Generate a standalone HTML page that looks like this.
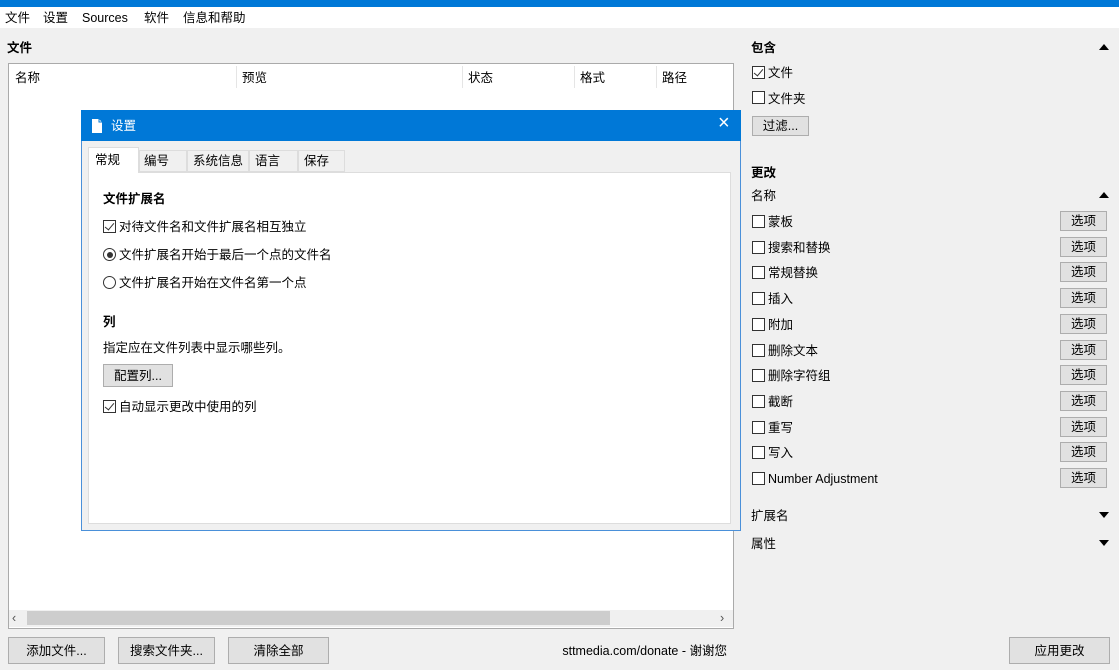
<!DOCTYPE html>
<html><head><meta charset="utf-8"><style>
*{box-sizing:border-box;margin:0;padding:0}
body{width:1119px;height:670px;background:#f0f0f0;position:relative;overflow:hidden;font-family:"Liberation Sans","Noto Sans CJK SC",sans-serif;font-size:12.5px;line-height:16px;color:#000}
.a{position:absolute;white-space:nowrap;line-height:16px;padding-top:1px}
.btn{position:absolute;background:#e1e1e1;border:1px solid #adadad;text-align:center;font-size:12.5px;padding-top:1px}
.cb{position:absolute;width:13px;height:13px;border:1px solid #333;background:#fff}
.cb.k::after{content:"";position:absolute;left:3px;top:0px;width:4px;height:8px;border:solid #333;border-width:0 1.5px 1.5px 0;transform:rotate(40deg)}
.b{font-weight:bold}
.tri{position:absolute;width:0;height:0;border-left:5px solid transparent;border-right:5px solid transparent}
</style></head><body>
<div class="a" style="left:0;top:0;width:1119px;height:7px;background:#0078d7"></div>
<div class="a" style="left:0;top:7px;width:1119px;height:21px;background:#fff"></div>
<div class="a" style="left:5px;top:9px">文件</div>
<div class="a" style="left:43px;top:9px">设置</div>
<div class="a" style="left:82px;top:9px">Sources</div>
<div class="a" style="left:144px;top:9px">软件</div>
<div class="a" style="left:183px;top:9px">信息和帮助</div>
<div class="a b" style="left:7px;top:39px">文件</div>
<div class="a" style="left:8px;top:63px;width:726px;height:566px;background:#fff;border:1px solid #aaa"></div>
<div class="a" style="left:15px;top:69px">名称</div>
<div class="a" style="left:236px;top:66px;width:1px;height:22px;background:#e5e5e5"></div>
<div class="a" style="left:242px;top:69px">预览</div>
<div class="a" style="left:462px;top:66px;width:1px;height:22px;background:#e5e5e5"></div>
<div class="a" style="left:468px;top:69px">状态</div>
<div class="a" style="left:574px;top:66px;width:1px;height:22px;background:#e5e5e5"></div>
<div class="a" style="left:580px;top:69px">格式</div>
<div class="a" style="left:656px;top:66px;width:1px;height:22px;background:#e5e5e5"></div>
<div class="a" style="left:662px;top:69px">路径</div>
<div class="a" style="left:9px;top:610px;width:724px;height:17px;background:#f0f0f0"></div>
<div class="a" style="left:27px;top:611px;width:583px;height:14px;background:#cdcdcd"></div>
<div class="a" style="left:12px;top:609px;color:#555">‹</div>
<div class="a" style="left:720px;top:609px;color:#555">›</div>
<div class="btn" style="left:8px;top:637px;width:97px;height:27px;line-height:24px">添加文件...</div>
<div class="btn" style="left:118px;top:637px;width:97px;height:27px;line-height:24px">搜索文件夹...</div>
<div class="btn" style="left:228px;top:637px;width:101px;height:27px;line-height:24px">清除全部</div>
<div class="a" style="right:392px;top:642px">sttmedia.com/donate - 谢谢您</div>
<div class="btn" style="left:1009px;top:637px;width:101px;height:27px;line-height:24px">应用更改</div>

<div class="a b" style="left:751px;top:39px">包含</div>
<div class="tri" style="left:1099px;top:44px;border-bottom:6px solid #000"></div>
<div class="cb k" style="left:752px;top:66px"></div><div class="a" style="left:768px;top:64px">文件</div>
<div class="cb" style="left:752px;top:91px"></div><div class="a" style="left:768px;top:90px">文件夹</div>
<div class="btn" style="left:752px;top:116px;width:57px;height:20px;line-height:17px">过滤...</div>
<div class="a b" style="left:751px;top:164px">更改</div>
<div class="a" style="left:751px;top:187px">名称</div>
<div class="tri" style="left:1099px;top:192px;border-bottom:6px solid #000"></div>
<div id="rows"></div>
<div class="a" style="left:751px;top:507px">扩展名</div>
<div class="tri" style="left:1099px;top:512px;border-top:6px solid #000"></div>
<div class="a" style="left:751px;top:535px">属性</div>
<div class="tri" style="left:1099px;top:540px;border-top:6px solid #000"></div>
<script>
var n=["蒙板","搜索和替换","常规替换","插入","附加","删除文本","删除字符组","截断","重写","写入","Number Adjustment"];
var h="";for(var i=0;i<n.length;i++){var y=214+i*25.7;
h+='<div class="cb" style="left:752px;top:'+(y+1)+'px"></div><div class="a" style="left:768px;top:'+(y-1)+'px">'+n[i]+'</div><div class="btn" style="left:1060px;top:'+(y-3)+'px;width:47px;height:20px;line-height:17px">选项</div>';}
document.getElementById("rows").outerHTML=h;
</script>

<div class="a" style="left:81px;top:110px;width:660px;height:421px;background:#f0f0f0;border:1px solid #4a90d9"></div>
<div class="a" style="left:81px;top:110px;width:660px;height:31px;background:#0078d7"></div>
<svg class="a" style="left:90px;top:117px" width="14" height="16"><path d="M2 1h7l3 3v11H2z" fill="#fff"/><path d="M9 1v3h3" fill="none" stroke="#0078d7"/></svg>
<div class="a" style="left:111px;top:117px;color:#fff">设置</div>
<div class="a" style="left:718px;top:114px;color:#fff;font-size:20px">×</div>
<div class="a" style="left:88px;top:172px;width:643px;height:352px;background:#fff;border:1px solid #ddd"></div>
<div class="a" style="left:88px;top:147px;width:51px;height:26px;background:#fff;border:1px solid #ddd;border-bottom:none"></div>
<div class="a" style="left:95px;top:151px">常规</div>
<div class="a" style="left:139px;top:150px;width:48px;height:22px;border:1px solid #ddd;background:#f0f0f0"></div><div class="a" style="left:144px;top:152px">编号</div>
<div class="a" style="left:187px;top:150px;width:62px;height:22px;border:1px solid #ddd;background:#f0f0f0"></div><div class="a" style="left:193px;top:152px">系统信息</div>
<div class="a" style="left:249px;top:150px;width:49px;height:22px;border:1px solid #ddd;background:#f0f0f0"></div><div class="a" style="left:255px;top:152px">语言</div>
<div class="a" style="left:298px;top:150px;width:47px;height:22px;border:1px solid #ddd;background:#f0f0f0"></div><div class="a" style="left:304px;top:152px">保存</div>
<div class="a b" style="left:103px;top:190px">文件扩展名</div>
<div class="cb k" style="left:103px;top:220px"></div><div class="a" style="left:119px;top:218px">对待文件名和文件扩展名相互独立</div>
<div class="a" style="left:103px;top:248px;width:13px;height:13px;border:1px solid #333;border-radius:50%;background:#fff;padding:0"><div style="margin:2.5px;width:6px;height:6px;border-radius:50%;background:#333"></div></div>
<div class="a" style="left:119px;top:246px">文件扩展名开始于最后一个点的文件名</div>
<div class="a" style="left:103px;top:276px;width:13px;height:13px;border:1px solid #333;border-radius:50%;background:#fff"></div>
<div class="a" style="left:119px;top:274px">文件扩展名开始在文件名第一个点</div>
<div class="a b" style="left:103px;top:313px">列</div>
<div class="a" style="left:103px;top:339px">指定应在文件列表中显示哪些列。</div>
<div class="btn" style="left:103px;top:364px;width:70px;height:23px;line-height:20px">配置列...</div>
<div class="cb k" style="left:103px;top:400px"></div><div class="a" style="left:119px;top:398px">自动显示更改中使用的列</div>
</body></html>
